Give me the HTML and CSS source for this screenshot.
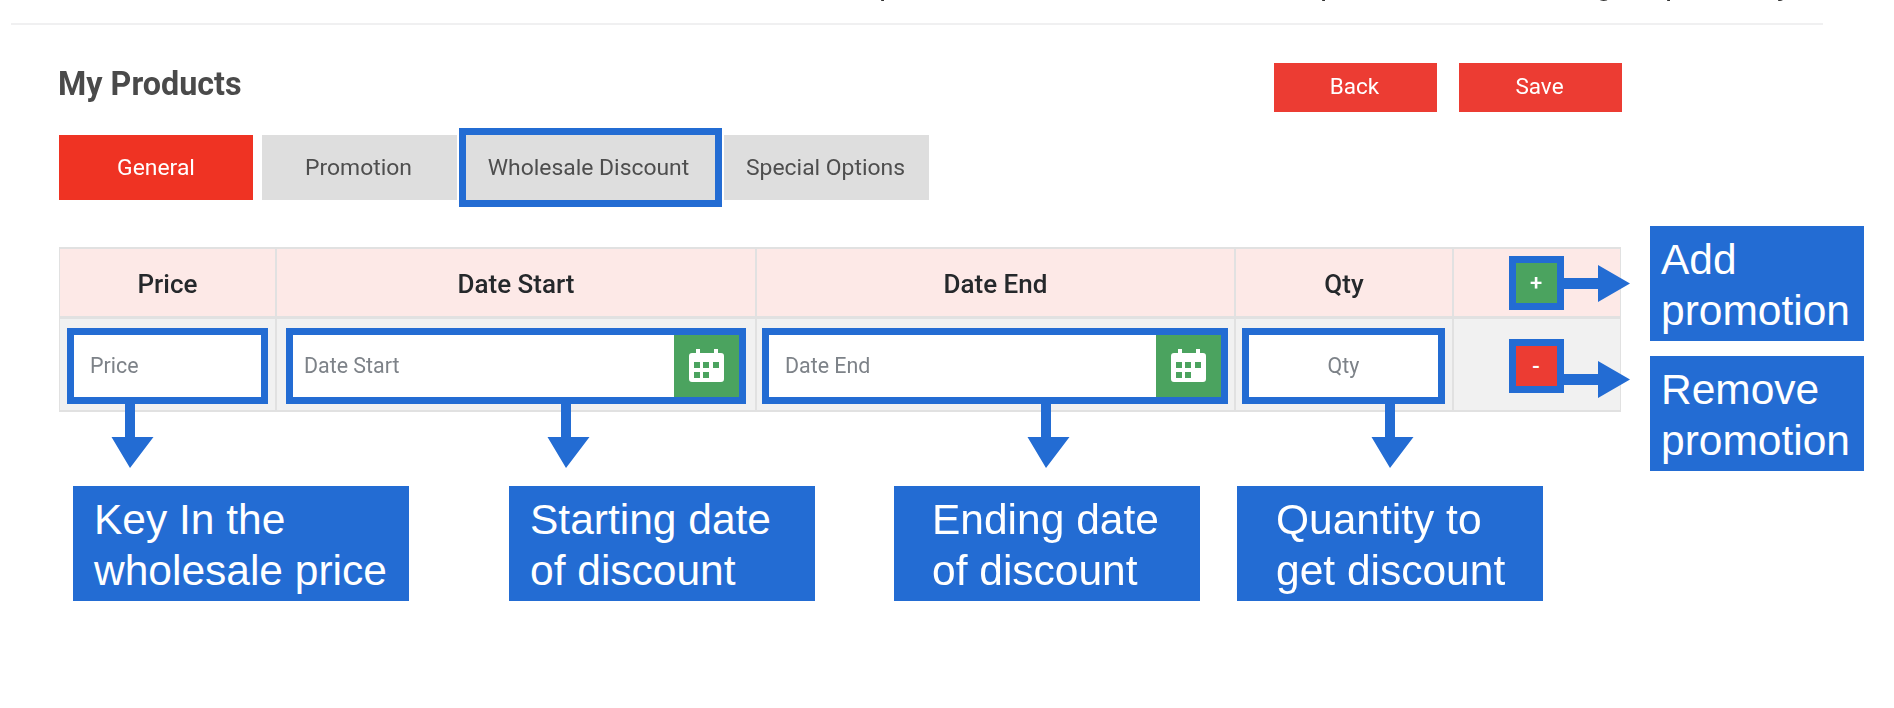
FILE: index.html
```html
<!DOCTYPE html>
<html lang="en">
<head>
<meta charset="utf-8">
<title>My Products</title>
<link rel="stylesheet" href="styles.css">
</head>
<body>
<div class="screen">
  <div class="topbar">
    <span class="cut cut-a">p</span>
    <span class="cut cut-b">p</span>
    <span class="cut cut-c">g</span>
    <span class="cut cut-d">p</span>
    <span class="cut cut-e">y</span>
  </div>
  <main class="page">
    <header class="head">
      <h1 class="title">My Products</h1>
      <div class="actions">
        <button class="btn">Back</button>
        <button class="btn">Save</button>
      </div>
    </header>
    <nav class="tabs">
      <a class="tab tab-general active">General</a>
      <a class="tab tab-promotion">Promotion</a>
      <a class="tab tab-wholesale mark">Wholesale Discount</a>
      <a class="tab tab-special">Special Options</a>
    </nav>
    <section class="table">
      <div class="cell th">Price</div>
      <div class="cell th">Date Start</div>
      <div class="cell th">Date End</div>
      <div class="cell th">Qty</div>
      <div class="cell th action"><button class="square add mark">+</button></div>

      <div class="cell td pad-price"><input class="field mark" placeholder="Price"></div>
      <div class="cell td pad-start">
        <div class="datefield mark">
          <input class="field bare start" placeholder="Date Start">
          <span class="cal">
            <svg class="cal-icon" viewBox="0 0 35 33"><path fill="#fff" d="M7 0h4v4h14V0h4v4h3a3 3 0 0 1 3 3v23a3 3 0 0 1-3 3H3a3 3 0 0 1-3-3V7a3 3 0 0 1 3-3h4z"/><path fill="#4ba35f" d="M5 13h6v6H5zM14 13h6v6h-6zM24 13h6v6h-6zM5 23h6v6H5zM14 23h6v6h-6z"/></svg>
          </span>
        </div>
      </div>
      <div class="cell td pad-end">
        <div class="datefield mark">
          <input class="field bare" placeholder="Date End">
          <span class="cal">
            <svg class="cal-icon" viewBox="0 0 35 33"><path fill="#fff" d="M7 0h4v4h14V0h4v4h3a3 3 0 0 1 3 3v23a3 3 0 0 1-3 3H3a3 3 0 0 1-3-3V7a3 3 0 0 1 3-3h4z"/><path fill="#4ba35f" d="M5 13h6v6H5zM14 13h6v6h-6zM24 13h6v6h-6zM5 23h6v6H5zM14 23h6v6h-6z"/></svg>
          </span>
        </div>
      </div>
      <div class="cell td pad-qty"><input class="field center mark" placeholder="Qty"></div>
      <div class="cell td action"><button class="square remove mark">-</button></div>
    </section>
  </main>

  <svg class="arrows" viewBox="0 0 1894 708">
    <path d="M125 403h10v34h18.500L130 468l-18.500-31H125z"/>
    <path d="M561 403h10v34h18.500L566 468l-18.500-31H561z"/>
    <path d="M1041 403h10v34h18.500L1046 468l-18.500-31H1041z"/>
    <path d="M1385 403h10v34h18.500L1390 468l-18.500-31H1385z"/>
    <path d="M1563 278h35v-13l32 18.500-32 18.500v-13h-35z"/>
    <path d="M1563 374h35v-13l32 18.500-32 18.500v-13h-35z"/>
  </svg>

  <div class="note note-add">Add<br>promotion</div>
  <div class="note note-remove">Remove<br>promotion</div>
  <div class="note note-price">Key In the<br>wholesale price</div>
  <div class="note note-start">Starting date<br>of discount</div>
  <div class="note note-end">Ending date<br>of discount</div>
  <div class="note note-qty">Quantity to<br>get discount</div>
</div>
</body>
</html>
```

FILE: styles.css
```css
* { box-sizing: border-box; }
html, body { margin: 0; padding: 0; background: #fff; }
body { font-family: Roboto, "Liberation Sans", sans-serif; }

.screen {
  position: relative;
  width: 1894px;
  height: 708px;
  overflow: hidden;
  filter: blur(0.4px);
}

/* top rule, with the descenders of a cropped text line above it */
.topbar {
  position: relative;
  height: 25px;
  margin: 0 71px 0 11px;
  border-bottom: 2px solid #f0f0f1;
}
.cut {
  position: absolute;
  top: -35px;
  font: 32px/36px "Liberation Sans", sans-serif;
  color: #333;
}
.cut-a { left: 868px; }
.cut-b { left: 1309px; }
.cut-c { left: 1584px; }
.cut-d { left: 1654px; }
.cut-e { left: 1766px; }

.page {
  width: 1622px;
  padding-left: 58px;
}

.head {
  display: flex;
  justify-content: space-between;
  margin-top: 38px;
  height: 49px;
}
.title {
  margin: 0;
  padding-top: 1px;
  font-size: 32.300px;
  font-weight: 700;
  line-height: 40px;
  color: #4a4a4a;
}
.actions { display: flex; gap: 22px; }
.btn {
  width: 163px;
  height: 49px;
  padding: 0 2px 3px 0;
  border: 0;
  background: #ec3c33;
  color: #fff;
  font: 400 22.500px Roboto, sans-serif;
}

.tabs {
  display: flex;
  gap: 9px;
  margin-top: 23px;
  margin-left: 1px;
  height: 65px;
}
.tab {
  display: flex;
  align-items: center;
  justify-content: center;
  background: #dedede;
  color: #4e4e4e;
  font-size: 22.900px;
}
.tab-general { width: 194px; }
.tab-promotion { width: 195px; padding-right: 2px; }
.tab-wholesale { width: 249px; padding-right: 4px; }
.tab-special { width: 205px; padding-right: 2px; }
.tab.active { background: #ef3323; color: #fff; }

.mark { outline: 7px solid #236cd3; }

.table {
  display: grid;
  grid-template-columns: 217px 480px 479px 218px 168px;
  grid-template-rows: 71px 94px;
  width: 1562px;
  margin-top: 47px;
  margin-left: 1px;
}
.cell {
  display: flex;
  align-items: center;
  justify-content: center;
  border: 1px solid #e1e1e1;
}
.th {
  background: #fde9e7;
  border-top-width: 2px;
  border-bottom-width: 2px;
  padding-top: 2px;
  color: #25282b;
  font-size: 26px;
  font-weight: 500;
}
.td {
  background: #f1f1f1;
  border-bottom-width: 2px;
  padding-top: 2px;
}
.pad-price { padding-left: 14px; padding-right: 14px; }
.pad-start { padding-left: 16px; padding-right: 16px; }
.pad-end { padding-left: 12px; padding-right: 13px; }
.pad-qty { padding-left: 13px; padding-right: 14px; }

.field {
  display: block;
  width: 100%;
  height: 62px;
  padding: 0 16px;
  border: 0;
  border-radius: 0;
  background: #fff;
  font: 400 21.400px Roboto, sans-serif;
  color: #7a8086;
}
.field::placeholder { color: #7d8288; opacity: 1; }
.field.center { text-align: center; }
.field.bare { flex: 1; min-width: 0; outline: 0; }
.field.start { padding-left: 11px; }

.datefield { display: flex; width: 100%; height: 62px; }
.cal {
  flex: none;
  display: flex;
  align-items: center;
  justify-content: center;
  width: 65px;
  background: #4ba35f;
}
.cal-icon { width: 35px; height: 33px; display: block; }

.action { padding-right: 2px; justify-content: center; }
.th.action { padding-top: 0; }
.square {
  display: block;
  width: 41px;
  height: 40px;
  padding: 0;
  border: 0;
  color: #fff;
  font: 500 22px Roboto, sans-serif;
}
.add { background: #4ba35f; }
.remove { background: #ec3c33; margin-top: 1px; }

.arrows {
  position: absolute;
  left: 0;
  top: 0;
  width: 1894px;
  height: 708px;
  fill: #236cd3;
  pointer-events: none;
}

.note {
  position: absolute;
  height: 115px;
  padding: 8px 0 0 21px;
  background: #236cd3;
  color: #fff;
  font: 42.500px/51px "Liberation Sans", Arial, sans-serif;
  white-space: nowrap;
}
.note-add { left: 1650px; top: 226px; width: 214px; padding-left: 11px; }
.note-remove { left: 1650px; top: 356px; width: 214px; padding-left: 11px; }
.note-price { left: 73px; top: 486px; width: 336px; }
.note-start { left: 509px; top: 486px; width: 306px; }
.note-end { left: 894px; top: 486px; width: 306px; padding-left: 38px; }
.note-qty { left: 1237px; top: 486px; width: 306px; padding-left: 39px; }
```
